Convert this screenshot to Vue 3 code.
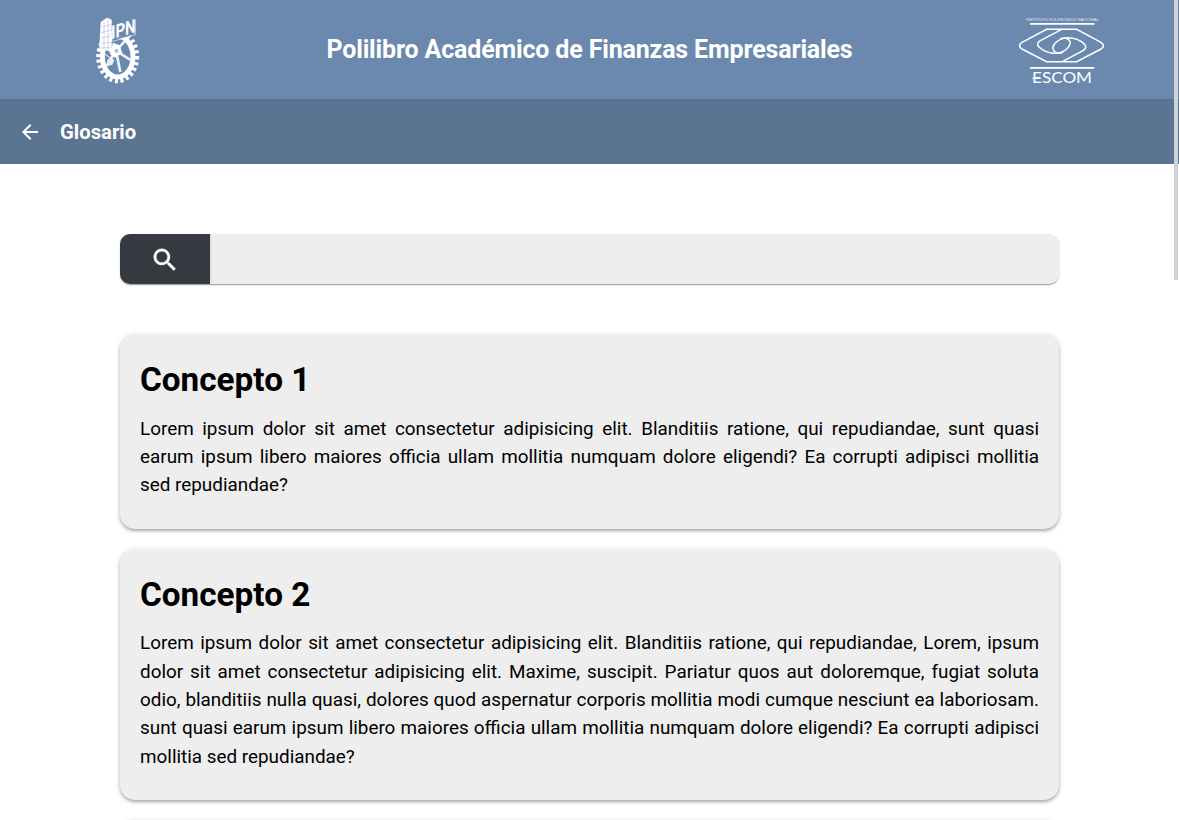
<script setup>
const concepts = [
  {
    title: 'Concepto 1',
    text: 'Lorem ipsum dolor sit amet consectetur adipisicing elit. Blanditiis ratione, qui repudiandae, sunt quasi earum ipsum libero maiores officia ullam mollitia numquam dolore eligendi? Ea corrupti adipisci mollitia sed repudiandae?'
  },
  {
    title: 'Concepto 2',
    text: 'Lorem ipsum dolor sit amet consectetur adipisicing elit. Blanditiis ratione, qui repudiandae, Lorem, ipsum dolor sit amet consectetur adipisicing elit. Maxime, suscipit. Pariatur quos aut doloremque, fugiat soluta odio, blanditiis nulla quasi, dolores quod aspernatur corporis mollitia modi cumque nesciunt ea laboriosam. sunt quasi earum ipsum libero maiores officia ullam mollitia numquam dolore eligendi? Ea corrupti adipisci mollitia sed repudiandae?'
  }
]
</script>

<template>
  <div class="page">
    <header class="banner">
      <svg class="ipn" viewBox="0 0 195 255" aria-label="IPN">
        <g fill="none" stroke="#fff">
          <ellipse cx="98" cy="146" rx="58" ry="73" stroke-width="13" stroke-dasharray="9 8" />
          <ellipse cx="98" cy="146" rx="46" ry="61" stroke-width="15" />
          <path d="M93 128L121 98M93 128L136 156M93 128L106 192M93 128L64 174M93 128L54 118" stroke-width="8" stroke="#edf2f7" />
        </g>
        <path d="M84 104L104 112L112 136L89 149L74 137Z" fill="#fff" />
        <circle cx="94" cy="129" r="6" fill="#a9bdd5" />
        <path d="M66 156l12-7 10 8-6 13-12 4z" fill="#e6edf5" />
        <path d="M47 42L66 29L80 35V134L62 125L42 132Z" fill="#fff" />
        <path d="M49 58L77 50M48 74L77 67M47 90L77 85M46 106L77 103M45 120L77 119M57 38V124M69 34V124" fill="none" stroke="#a3b6cd" stroke-width="1.600" />
        <path d="M38 130L66 125L96 137M54 134L82 154" fill="none" stroke="#fff" stroke-width="3" />
        <path d="M82 98L150 78V32L118 42L82 50Z" fill="#6b89ae" />
        <text transform="translate(78 94) skewY(-16)" class="ipn-text" textLength="74" lengthAdjust="spacingAndGlyphs">IPN</text>
        <path d="M80 101L151 80V34" fill="none" stroke="#d5dfeb" stroke-width="2.500" />
      </svg>
      <h1>Polilibro Académico de Finanzas Empresariales</h1>
      <svg class="escom" viewBox="0 0 345 255" aria-label="ESCOM">
        <text x="63" y="40" textLength="218" lengthAdjust="spacingAndGlyphs" class="tiny">INSTITUTO POLITECNICO NACIONAL</text>
        <g fill="none" stroke="#fff" stroke-width="4.500">
          <path d="M75 47.500H268M75 179.500H268" stroke-width="5" />
          <path d="M125 64H215L288 103Q303 113 288 123L215 161H125L51 123Q36 113 51 103Z" />
          <path d="M170 64L106 98Q92 106 102 117C115 130 132 136 152 136C181 135 204 109 192 96C187 90 175 89 166 92" />
          <path d="M172 161L234 128Q248 120 238 108C225 95 208 89 188 89C158 90 135 116 147 129C152 135 163 137 174 133" />
        </g>
        <path d="M82 211H108" stroke="#fff" stroke-width="3" />
        <text x="81" y="224" textLength="180" lengthAdjust="spacingAndGlyphs" class="school">ESCOM</text>
      </svg>
    </header>

    <nav class="toolbar">
      <svg class="back" viewBox="0 0 24 24"><path d="M20 11H7.830l5.590-5.590L12 4l-8 8 8 8 1.410-1.410L7.830 13H20v-2z" /></svg>
      <span>Glosario</span>
    </nav>

    <main>
      <div class="search">
        <button aria-label="Buscar">
          <svg viewBox="0 0 24 24"><path d="M15.500 14h-.79l-.28-.27C15.410 12.590 16 11.110 16 9.500 16 5.910 13.090 3 9.500 3S3 5.910 3 9.500 5.910 16 9.500 16c1.610 0 3.090-.59 4.230-1.570l.27.28v.79l5 4.990L20.490 19l-4.990-5zm-6 0C7.010 14 5 11.990 5 9.500S7.010 5 9.500 5 14 7.010 14 9.500 11.990 14 9.500 14z" /></svg>
        </button>
        <input type="text" aria-label="Buscar concepto" />
      </div>
      <article v-for="c in concepts" :key="c.title" class="card">
        <h2>{{ c.title }}</h2>
        <p>{{ c.text }}</p>
      </article>
      <article class="card next"></article>
    </main>
    <div class="thumb"></div>
  </div>
</template>

<style>
body { margin: 0; overflow: hidden; }
</style>

<style scoped>
.page {
  position: relative;
  height: 820px;
  overflow: hidden;
  background: #fff;
  color: #000;
  font-family: Roboto, "Liberation Sans", sans-serif;
}
.banner {
  box-sizing: border-box;
  height: 99px;
  padding: 8px 59px 0 85px;
  display: flex;
  justify-content: space-between;
  align-items: flex-start;
  background: #6b89ae;
}
.ipn { width: 65px; height: 85px; }
.escom { width: 115px; height: 85px; }
.ipn-text { font: bold 56px Roboto, sans-serif; fill: #fff; }
.tiny { font: 12px "Liberation Sans", sans-serif; fill: #e3eaf2; }
.school { font: 46px Lato, sans-serif; fill: #fff; }
h1 {
  margin: 0 0 0 24px;
  color: #fff;
  font-size: 25px;
  line-height: 84px;
  font-weight: 700;
  letter-spacing: -0.160px;
  white-space: nowrap;
}
.toolbar {
  height: 65px;
  padding-left: 18px;
  display: flex;
  align-items: center;
  gap: 18px;
  background: #5b7491;
  color: #fff;
  font-size: 20.300px;
  font-weight: 700;
}
.back { width: 24px; height: 24px; fill: #fff; }
main { padding: 70px 120px 0 120px; }
.search {
  display: flex;
  height: 50px;
  margin-bottom: 50px;
  border-radius: 10px;
  overflow: hidden;
  background: #eee;
  box-shadow: 0 2px 1px -1px rgba(0,0,0,.2), 0 1px 1px rgba(0,0,0,.14), 0 1px 3px rgba(0,0,0,.12);
}
.search button {
  width: 90px;
  padding: 0;
  border: 0;
  display: flex;
  align-items: center;
  justify-content: center;
  background: #343a40;
  box-shadow: 0 0 3px rgba(0,0,0,.2);
}
.search svg { width: 30px; height: 30px; margin-top: 1px; fill: #fff; stroke: #fff; stroke-width: .3; }
.search input {
  flex: 1;
  border: 0;
  outline: 0;
  padding: 0 12px;
  background: transparent;
  font: 19px Roboto, sans-serif;
}
.card {
  box-sizing: border-box;
  margin-bottom: 19.900px;
  padding: 21px 20px 29px;
  border-radius: 15px;
  background: #eee;
  box-shadow: 0 2px 4px -1px rgba(0,0,0,.2), 0 2px 3px rgba(0,0,0,.16), 0 1px 7px rgba(0,0,0,.1);
}
.next { height: 100px; }
h2 { margin: 0 0 9.700px; font-size: 33.300px; line-height: 50px; font-weight: 700; }
p { margin: 0; font-size: 18.880px; line-height: 28.350px; text-align: justify; }
.thumb {
  position: absolute;
  top: 0;
  right: 1px;
  width: 4px;
  height: 280px;
  background: #d0d2d5;
}
</style>
